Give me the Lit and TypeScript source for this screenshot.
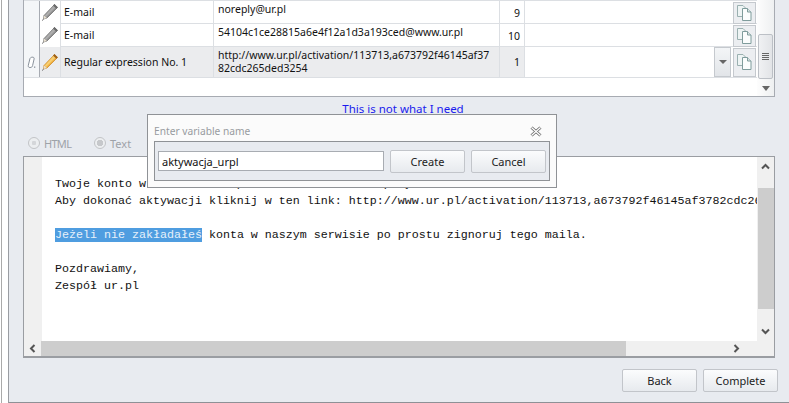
import { LitElement, html, css, svg } from "lit";
import { customElement } from "lit/decorators.js";

const pencil = (on: boolean) => {
  const body = on ? "#f0b040" : "#8f8f8f";
  const dark = on ? "#c8821c" : "#666";
  const tip = on ? "#a0621a" : "#6c6c6c";
  return html`<svg class="pen" width="18" height="19" viewBox="0 0 18 19">
    ${svg`<path d="M13.5 1.5 L16.5 4.5 L6 15 L2.5 16 L3 12.5 Z" fill="${body}" stroke="${dark}" stroke-width=".7"/>
    <path d="M13 2.5 L3.8 12.6 L5 14 L15 4 Z" fill="${on ? "#f7cf72" : "#adadad"}"/>
    <path d="M13.5 1 L16.8 4.3 L15.3 5.8 L12 2.5 Z" fill="${tip}"/>
    <path d="M3 12.5 L6 15 L2.6 16 Z" fill="#e8e0d0"/>
    <path d="M1 17.6 L2.8 16" stroke="#777" stroke-width="1" fill="none"/>`}
  </svg>`;
};

const copy = html`<svg width="15" height="16" viewBox="0 0 15 16">
  ${svg`<path d="M.5 .5H6L8.5 3V11.5H.5Z" fill="#eef4f4" stroke="#9ab0b0"/>
  <path d="M5.5 3.5H10.5L14 7V15.5H5.5Z" fill="#fbfdfd" stroke="#7f9c9c"/>
  <path d="M10.5 3.5V7H14" fill="#dbe6e6" stroke="#7f9c9c"/>`}
</svg>`;

const ind = html`<svg width="9" height="13" viewBox="0 0 9 13">
  ${svg`<path d="M5 1.2C6.4 1 7.4 1.5 7.1 3L5.6 9.5C5.3 11 4.5 11.5 3 11.5C1.6 11.5 1 10.7 1.3 9.3L2.9 2.8C3.1 1.8 4 1.3 5 1.2Z" fill="#fff" stroke="#8a929c"/>
  <rect x="7" y="10.5" width="1.3" height="1.3" fill="#8a929c"/>`}
</svg>`;

const rows = [
  { name: "E-mail", val: "noreply@ur.pl", n: "9", on: false },
  { name: "E-mail", val: "54104c1ce28815a6e4f12a1d3a193ced@www.ur.pl", n: "10", on: false },
  { name: "Regular expression No. 1", val: "http://www.ur.pl/activation/113713,a673792f46145af3782cdc265ded3254", n: "1", on: true },
];

const rowClasses = ["r1", "r2", "r3"];

@customElement("app-root")
export class AppRoot extends LitElement {
  static styles = css`
    :host { display: block; width: 789px; height: 403px; overflow: hidden; position: relative; background: #fff; font-family: "Open Sans", "Liberation Sans", sans-serif; }
    * { box-sizing: border-box; }
    .page { display: flex; height: 403px; }
    .strip { flex: none; border-left: 1px solid #aaa; background: #fff; margin-left: 1px; width: 7px; }
    .panel { flex: 1; border-left: 1px solid #9a9da2; border-bottom: 1px solid #8e9196; background: #e8ebf0; padding: 0 14px 0 14px; display: flex; flex-direction: column; font-family: "Noto Sans", "DejaVu Sans", sans-serif; }
    .grid { height: 97px; background: #fff; border: 1px solid #a7abb2; border-top: none; position: relative; display: flex; }
    .rows { flex: 1; display: flex; flex-direction: column; min-width: 0; }
    .row { display: grid; grid-template-columns: 16px 21px 153px 286px 25px 1fr 24px; border-bottom: 1px solid #dcdfe3; }
    .r1 { height: 24px; border-top: 1px solid #dcdfe3; }
    .r2 { height: 23px; }
    .r3 { height: 31px; }
    .cell { font-size: 10.5px; color: #111; border-right: 1px solid #dcdfe3; display: flex; align-items: center; padding-left: 3px; min-width: 0; line-height: 13px; }
    .c-ind { background: #f4f6f8; border-right: 1px solid #a7abb2; padding: 0; justify-content: center; }
    .c-pen { padding: 0; justify-content: center; background: #fff; }
    .on .c-pen, .on .c-name, .on .c-val, .on .c-num { background: #ebecee; }
    .c-val { align-items: flex-start; padding: 2px 4px 0 4px; word-break: break-all; white-space: normal; }
    .on .c-val { padding-top: 2px; }
    .c-num { justify-content: flex-end; padding: 1px 4px 0 0; }
    .c-fill { padding: 0; position: relative; border-right: none; justify-content: flex-end; }
    .drop { width: 17px; height: 30px; background: linear-gradient(#f3f5f7, #e2e5e9); border: 1px solid #c5c9ce; display: flex; align-items: center; justify-content: center; margin-right: 2px; }
    .tri { width: 0; height: 0; border-left: 4px solid transparent; border-right: 4px solid transparent; border-top: 4px solid #666; }
    .c-copy { padding: 1px 1px 0 0; border-right: none; display: block; }
    .cbtn { width: 23px; background: #eceef1; border: 1px solid #c5c9ce; display: flex; align-items: center; justify-content: center; padding-bottom: 1px; }
    .r1 .cbtn, .r2 .cbtn { height: 22px; }
    .r3 .cbtn { height: 29px; }
    .vs { width: 17px; flex: none; background: linear-gradient(90deg, #fdfdfd, #eef0f1); display: flex; flex-direction: column; align-items: center; padding-top: 34px; }
    .thumb { width: 15px; height: 45px; border: 1px solid #bcc0c6; border-radius: 2px; background: linear-gradient(90deg, #f0f1f3, #e2e4e7); display: flex; flex-direction: column; align-items: center; justify-content: center; gap: 1px; padding-bottom: 1px; }
    .thumb i { display: block; width: 7px; height: 1px; background: #666; }
    .vs .tri { margin-top: 7px; border-left-width: 4.5px; border-right-width: 4.5px; border-top-width: 5px; }
    .link { height: 20px; text-align: center; font-size: 11.5px; color: #1a1aee; line-height: 24px; text-decoration: underline; white-space: nowrap; margin-left: 8px; }
    .radios { height: 39px; display: flex; align-items: center; gap: 15px; padding: 13px 0 0 5px; font-size: 11px; color: #9ea2a8; }
    .radio { display: flex; align-items: center; gap: 4px; width: 51px; }
    .radio.html { letter-spacing: -.7px; }
    .radio b { width: 12px; height: 12px; border-radius: 50%; border: 1px solid #c2c4c7; background: radial-gradient(circle, #d4d6d9 0 2px, #eceef0 2.5px); flex: none; }
    .radio.checked b { background: radial-gradient(circle, #c6c8cb 0 3px, #eceef0 3.5px); }
    .editor { height: 202px; border: 1px solid #9a9da2; border-bottom-width: 2px; background: #fff; display: grid; grid-template-columns: 18px 1fr 17px; grid-template-rows: 1fr 15px; }
    .gutter { background: #f0f0f0; }
    .text { overflow: hidden; padding: 19px 0 0 13px; font: 11.67px/17px "Liberation Mono", monospace; white-space: pre; color: #111; }
    .mark { background: #4f9de0; color: #e6f0fa; }
    .vbar { background: #f0f0f0; display: flex; flex-direction: column; align-items: center; padding-top: 6px; }
    .vthumb { width: 16px; height: 121px; background: #cdcdcd; margin-top: 18px; }
    .chev { margin-top: 19px; }
    .hbar { grid-column: 1 / 3; background: #f0f0f0; display: flex; align-items: stretch; }
    .hbar .l { width: 17px; display: flex; align-items: center; justify-content: center; }
    .hthumb { width: 585px; background: #cdcdcd; }
    .hbar .r { flex: 1; display: flex; align-items: center; justify-content: flex-end; padding-right: 17px; }
    .corner { background: #f0f0f0; }
    .foot { display: flex; justify-content: flex-end; gap: 6px; padding: 11px 0 0 0; margin-right: -3px; }
    .btn { width: 75px; height: 23px; border: 1px solid #c2c5ca; border-radius: 2px; background: linear-gradient(#fbfcfd, #e7eaee); font-size: 11px; color: #222; display: flex; align-items: center; justify-content: center; font-family: inherit; padding: 0; }
    .dialog { position: absolute; left: 147px; top: 114px; width: 410px; height: 74px; background: #fbfbfb; border: 1px solid #8f9296; padding: 0 6px 6px 6px; display: flex; flex-direction: column; font-family: "Noto Sans", "DejaVu Sans", sans-serif; }
    .title { height: 26px; display: flex; align-items: center; justify-content: space-between; font-size: 10.2px; color: #989ba0; padding: 6px 8px 0 0; }
    .body { flex: 1; border: 1px solid #8f9296; background: #e8ebf0; display: flex; align-items: center; gap: 6px; padding: 0 2px 0 3px; }
    .input { width: 226px; height: 20px; background: #fff; border: 1px solid #a8acb2; font-size: 11px; color: #111; display: flex; align-items: center; padding-left: 3px; }
  `;

  render() {
    return html`
      <div class="page">
        <div class="strip"></div>
        <div class="panel">
          <div class="grid">
            <div class="rows">
              ${rows.map(
                (r, i) => html`<div class="row ${rowClasses[i]} ${r.on ? "on" : ""}">
                  <div class="cell c-ind">${r.on ? ind : ""}</div>
                  <div class="cell c-pen">${pencil(r.on)}</div>
                  <div class="cell c-name">${r.name}</div>
                  <div class="cell c-val">${r.val}</div>
                  <div class="cell c-num">${r.n}</div>
                  <div class="cell c-fill">${r.on ? html`<div class="drop"><span class="tri"></span></div>` : ""}</div>
                  <div class="cell c-copy"><div class="cbtn">${copy}</div></div>
                </div>`
              )}
            </div>
            <div class="vs">
              <div class="thumb"><i></i><i></i><i></i><i></i></div>
              <span class="tri"></span>
            </div>
          </div>
          <div class="link">This is not what I need</div>
          <div class="radios">
            <div class="radio html"><b></b>HTML</div>
            <div class="radio checked"><b></b>Text</div>
          </div>
          <div class="editor">
            <div class="gutter"></div>
            <div class="text">Twoje konto w serwisie ur.pl zostało utworzone pomyślnie.
Aby dokonać aktywacji kliknij w ten link: http://www.ur.pl/activation/113713,a673792f46145af3782cdc265ded3254

<span class="mark">Jeżeli nie zakładałeś</span> konta w naszym serwisie po prostu zignoruj tego maila.

Pozdrawiamy,
Zespół ur.pl</div>
            <div class="vbar">
              <svg width="9" height="7" viewBox="0 0 9 7">${svg`<path d="M1 5.5L4.5 2L8 5.5" fill="none" stroke="#555" stroke-width="2"/>`}</svg>
              <div class="vthumb"></div>
              <svg class="chev" width="9" height="7" viewBox="0 0 9 7">${svg`<path d="M1 1.5L4.5 5L8 1.5" fill="none" stroke="#555" stroke-width="2"/>`}</svg>
            </div>
            <div class="hbar">
              <div class="l"><svg width="7" height="9" viewBox="0 0 7 9">${svg`<path d="M5.5 1L2 4.5L5.5 8" fill="none" stroke="#555" stroke-width="2"/>`}</svg></div>
              <div class="hthumb"></div>
              <div class="r"><svg width="7" height="9" viewBox="0 0 7 9">${svg`<path d="M1.5 1L5 4.5L1.5 8" fill="none" stroke="#555" stroke-width="2"/>`}</svg></div>
            </div>
            <div class="corner"></div>
          </div>
          <div class="foot">
            <div class="btn">Back</div>
            <div class="btn">Complete</div>
          </div>
        </div>
      </div>
      <div class="dialog">
        <div class="title">
          <span>Enter variable name</span>
          <svg width="12" height="11" viewBox="0 0 12 11">${svg`<path d="M1.5 1.5L10.5 9.5M10.5 1.5L1.5 9.5" stroke="#666" stroke-width="3" fill="none"/><path d="M1.5 1.5L10.5 9.5M10.5 1.5L1.5 9.5" stroke="#fff" stroke-width="1.3" fill="none"/>`}</svg>
        </div>
        <div class="body">
          <div class="input">aktywacja_urpl</div>
          <div class="btn">Create</div>
          <div class="btn">Cancel</div>
        </div>
      </div>
    `;
  }
}
